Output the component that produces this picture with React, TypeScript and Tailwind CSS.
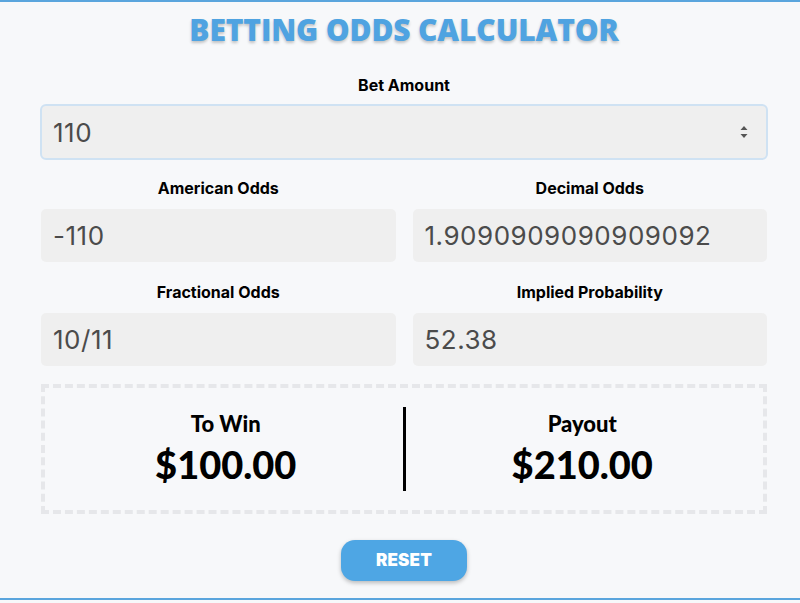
import React, { useState } from "react";

const LABEL = "text-[16px] font-bold text-black text-center leading-5 [font-family:Inter,'Liberation_Sans',sans-serif]";
const FIELD =
  "flex h-[53px] items-center rounded-[5px] bg-[#efefef] px-[12px] text-[26px] text-[#4b4b4b] tracking-[0.02em] [font-family:Inter,'Liberation_Sans',sans-serif]";

function Field({ label, value }: { label: string; value: string }) {
  return (
    <div className="flex flex-col">
      <div className={LABEL}>{label}</div>
      <div className={`mt-[11px] ${FIELD}`}>{value}</div>
    </div>
  );
}

function Spinner() {
  return (
    <svg width="8" height="18" viewBox="0 0 8 18" aria-hidden="true" className="shrink-0">
      <path d="M4 3 L7.5 7 L0.5 7 Z" fill="#555" />
      <path d="M4 15 L7.5 11 L0.5 11 Z" fill="#555" />
    </svg>
  );
}

function Result({ label, amount }: { label: string; amount: string }) {
  return (
    <div className="flex flex-1 flex-col items-center pb-[2px] [font-family:Lato,'Liberation_Sans',sans-serif]">
      <div className="text-[22px] font-black leading-6 text-black">{label}</div>
      <div className="mt-[8px] text-[38px] font-black leading-[40px] text-black">{amount}</div>
    </div>
  );
}

export default function App() {
  const [bet] = useState("110");

  return (
    <div className="min-h-[603px] w-[800px] bg-[#f7f8fa]">
      <div className="border-y-2 border-[#5aa5dd] pb-[17px] pl-[41px] pr-[33px]">
        {/* heading */}
        <div className="flex h-[54px] items-center justify-center">
          <h1 className="whitespace-nowrap text-[30px] font-extrabold uppercase tracking-[-0.005em] text-[#4fa3e1] [font-family:'Open_Sans',sans-serif] [text-shadow:0_2px_3px_rgba(0,0,0,0.22)]">
            Betting Odds Calculator
          </h1>
        </div>

        {/* bet amount */}
        <div className={`mt-[19px] ${LABEL}`}>Bet Amount</div>
        <div className="mx-[-1px] mt-[9px] flex h-[56px] items-center justify-between rounded-[6px] border-2 border-[#cfe2f3] bg-[#efefef] pl-[11px] pr-[18px]">
          <span className="text-[26px] tracking-[0.02em] text-[#4b4b4b] [font-family:Inter,'Liberation_Sans',sans-serif]">{bet}</span>
          <Spinner />
        </div>

        <div className="mt-[18px] grid grid-cols-2 gap-x-[17px]">
          <Field label="American Odds" value="-110" />
          <Field label="Decimal Odds" value="1.9090909090909092" />
        </div>
        <div className="mt-[20px] grid grid-cols-2 gap-x-[17px]">
          <Field label="Fractional Odds" value="10/11" />
          <Field label="Implied Probability" value="52.38" />
        </div>

        {/* payout summary */}
        <div className="mt-[18px] flex h-[130px] items-center border-4 border-dashed border-[#e6e7ea] px-[4px]">
          <Result label="To Win" amount="$100.00" />
          <div className="h-[84px] w-[3px] bg-black" />
          <Result label="Payout" amount="$210.00" />
        </div>

        <div className="mt-[26px] flex justify-center">
          <button
            type="button"
            className="h-[41px] w-[126px] rounded-[14px] bg-[#4ea6e4] text-[17px] font-black uppercase tracking-[0.01em] text-white shadow-[0_2px_4px_rgba(0,0,0,0.25)] [font-family:Inter,sans-serif]"
          >
            Reset
          </button>
        </div>
      </div>
    </div>
  );
}
